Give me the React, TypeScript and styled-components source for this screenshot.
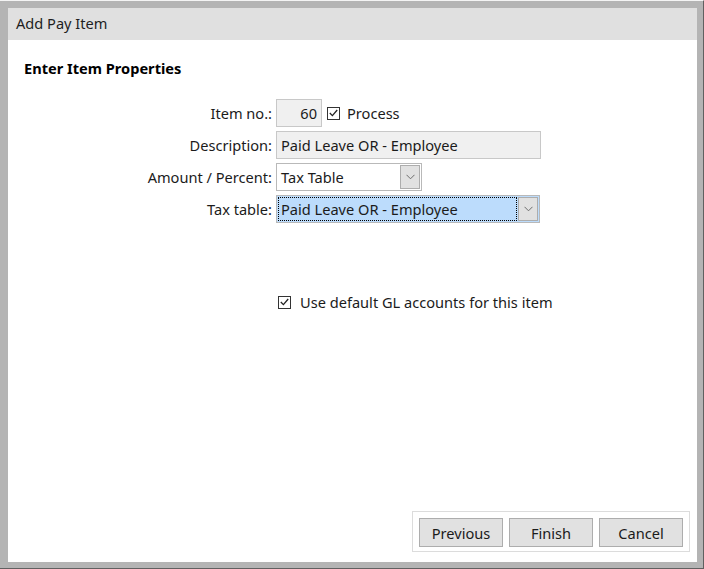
import React from 'react';
import styled, { createGlobalStyle } from 'styled-components';

const GlobalStyle = createGlobalStyle`
  html, body {
    margin: 0;
    padding: 0;
    background: #ffffff;
  }
  body {
    font-family: 'Noto Sans', 'Open Sans', sans-serif;
    font-size: 14.6px;
    color: #1b1b1b;
  }
`;

const Frame = styled.div`
  box-sizing: border-box;
  width: 704px;
  height: 569px;
  background: #b4b4b4;
  border-top: 1px solid #f4f4f4;
  border-right: 1px solid #606060;
  border-bottom: 1px solid #606060;
  padding: 7px 6px 6px 8px;
  display: flex;
  flex-direction: column;
`;

const TitleBar = styled.div`
  height: 32px;
  flex: 0 0 32px;
  background: #e0e0e0;
  display: flex;
  align-items: center;
  padding: 0 0 2px 8px;
  box-sizing: border-box;
  color: #1e1e1e;
`;

const Body = styled.div`
  flex: 1;
  background: #ffffff;
  display: flex;
  flex-direction: column;
  min-height: 0;
`;

const SectionTitle = styled.div`
  font-weight: 700;
  color: #000;
  padding: 18px 0 0 16px;
  height: 21px;
  line-height: 21px;
`;

const Form = styled.div`
  display: grid;
  grid-template-columns: 264px auto;
  grid-auto-rows: 28px;
  column-gap: 4px;
  row-gap: 4px;
  margin-top: 20px;
  align-items: center;
`;

const Label = styled.div`
  text-align: right;
  white-space: nowrap;
`;

const Controls = styled.div`
  display: flex;
  align-items: center;
  gap: 5px;
`;

const TextBox = styled.div<{ $width: number; $align?: string }>`
  box-sizing: border-box;
  width: ${p => p.$width}px;
  height: 28px;
  border: 1px solid #c8c8c8;
  background: #f0f0f0;
  display: flex;
  align-items: center;
  justify-content: ${p => (p.$align === 'right' ? 'flex-end' : 'flex-start')};
  padding: 0 4px;
  white-space: nowrap;
`;

const Select = styled.div<{ $width: number; $focused?: boolean }>`
  box-sizing: border-box;
  width: ${p => p.$width}px;
  height: 28px;
  border: 1px solid #b9b9b9;
  background: ${p => (p.$focused ? '#bcdcfc' : '#ffffff')};
  display: flex;
  align-items: stretch;
  padding: 1px;
`;

const SelectText = styled.div<{ $focused?: boolean }>`
  flex: 1;
  display: flex;
  align-items: center;
  padding-left: 2px;
  border: 1px dotted ${p => (p.$focused ? '#000000' : 'transparent')};
  white-space: nowrap;
`;

const DropButton = styled.div`
  box-sizing: border-box;
  width: 20px;
  margin-left: 1px;
  background: #e1e1e1;
  border: 1px solid #adadad;
  display: flex;
  align-items: center;
  justify-content: center;
`;

const Check = styled.div`
  box-sizing: border-box;
  width: 13px;
  height: 13px;
  border: 1px solid #333333;
  background: #ffffff;
  display: flex;
  align-items: center;
  justify-content: center;
`;

const CheckRow = styled.label<{ $gap: number }>`
  display: flex;
  align-items: center;
  gap: ${p => p.$gap}px;
  white-space: nowrap;
`;

const GlRow = styled.div`
  margin-top: 69px;
  padding-left: 270px;
  height: 20px;
  display: flex;
  align-items: center;
`;

const Spacer = styled.div`
  flex: 1;
`;

const ButtonPanel = styled.div`
  box-sizing: border-box;
  align-self: flex-end;
  margin: 0 7px 10px 0;
  width: 278px;
  height: 41px;
  border: 1px solid #dcdcdc;
  padding: 6px 6px 0 6px;
  display: flex;
  gap: 6px;
`;

const Button = styled.button`
  box-sizing: border-box;
  width: 84px;
  height: 29px;
  background: #e1e1e1;
  border: 1px solid #adadad;
  font-family: inherit;
  font-size: 14.6px;
  color: #1b1b1b;
  padding: 0;
`;

const Chevron = () => (
  <svg width="9" height="6" viewBox="0 0 9 6">
    <path d="M0.5 0.8 L4.5 4.8 L8.5 0.8" fill="none" stroke="#6d6d6d" strokeWidth="1" />
  </svg>
);

const Tick = () => (
  <svg width="9" height="8" viewBox="0 0 9 8">
    <path d="M0.8 4 L3.4 6.6 L8.2 1" fill="none" stroke="#222" strokeWidth="1.3" />
  </svg>
);

const App = () => (
  <>
    <GlobalStyle />
    <Frame>
      <TitleBar>Add Pay Item</TitleBar>
      <Body>
        <SectionTitle>Enter Item Properties</SectionTitle>
        <Form>
          <Label>Item no.:</Label>
          <Controls>
            <TextBox $width={46} $align="right">60</TextBox>
            <CheckRow $gap={7}>
              <Check>
                <Tick />
              </Check>
              Process
            </CheckRow>
          </Controls>

          <Label>Description:</Label>
          <Controls>
            <TextBox $width={265}>Paid Leave OR - Employee</TextBox>
          </Controls>

          <Label>Amount / Percent:</Label>
          <Controls>
            <Select $width={146}>
              <SelectText>Tax Table</SelectText>
              <DropButton>
                <Chevron />
              </DropButton>
            </Select>
          </Controls>

          <Label>Tax table:</Label>
          <Controls>
            <Select $width={264} $focused>
              <SelectText $focused>Paid Leave OR - Employee</SelectText>
              <DropButton>
                <Chevron />
              </DropButton>
            </Select>
          </Controls>
        </Form>

        <GlRow>
          <CheckRow $gap={9}>
            <Check>
              <Tick />
            </Check>
            Use default GL accounts for this item
          </CheckRow>
        </GlRow>

        <Spacer />

        <ButtonPanel>
          <Button>Previous</Button>
          <Button>Finish</Button>
          <Button>Cancel</Button>
        </ButtonPanel>
      </Body>
    </Frame>
  </>
);

export default App;
